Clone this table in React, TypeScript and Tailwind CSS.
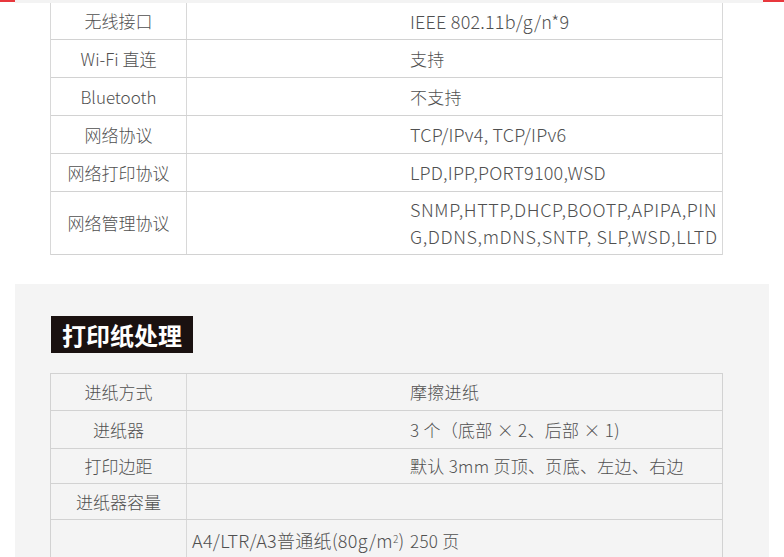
import React from "react";

type R = { label: string; value: React.ReactNode; h: string; v?: string };

const rows1: R[] = [
  { label: "无线接口", value: "IEEE 802.11b/g/n*9", h: "h-[37px]", v: "text-[18px] tracking-[0.2px]" },
  { label: "Wi-Fi 直连", value: "支持", h: "h-[38px]" },
  { label: "Bluetooth", value: "不支持", h: "h-[38px]" },
  { label: "网络协议", value: "TCP/IPv4, TCP/IPv6", h: "h-[38px]", v: "text-[18px] tracking-[0.2px]" },
  { label: "网络打印协议", value: "LPD,IPP,PORT9100,WSD", h: "h-[38px]", v: "text-[18px] tracking-[0.2px]" },
  {
    label: "网络管理协议",
    value: (
      <div className="leading-[27px]">
        <div>SNMP,HTTP,DHCP,BOOTP,APIPA,PIN</div>
        <div>G,DDNS,mDNS,SNTP, SLP,WSD,LLTD</div>
      </div>
    ),
    h: "h-[63px]",
    v: "text-[18px] tracking-[0.6px]",
  },
];

const rows2: R[] = [
  { label: "进纸方式", value: "摩擦进纸", h: "h-[37px]" },
  { label: "进纸器", value: "3 个（底部 × 2、后部 × 1)", h: "h-[38px]" },
  { label: "打印边距", value: "默认 3mm 页顶、页底、左边、右边", h: "h-[35px]" },
  { label: "进纸器容量", value: "", h: "h-[36px]" },
];

function Row({ label, value, h, v }: R) {
  return (
    <div className={`grid grid-cols-[136px_1fr] border-b border-[#d2d2d2] ${h}`}>
      <div className="flex items-center justify-center border-r border-[#d8d8d8] whitespace-nowrap">
        {label}
      </div>
      <div className={`flex items-center pl-[223px] whitespace-nowrap ${v ?? "tracking-[0.3px]"}`}>{value}</div>
    </div>
  );
}

export default function App() {
  return (
    <div className="w-[784px] h-[557px] overflow-hidden bg-white font-['Noto_Sans_CJK_SC','Noto_Sans',sans-serif] text-[17px] font-light text-[#505050]">
      <div className="flex h-[3px]">
        <div className="w-[15px] h-[2px] bg-[#e8383d]" />
        <div className="flex-1 h-[3px] bg-[#f3f3f3]" />
        <div className="w-[21px] h-[2px] bg-[#e8383d]" />
      </div>

      <div className="ml-[50px] w-[673px] border-l border-r border-[#d8d8d8] bg-white">
        {rows1.map((r) => (
          <Row key={r.label} {...r} />
        ))}
      </div>

      <div className="mx-[15px] mt-[29px] h-[300px] bg-[#f4f4f4] pt-[32px]">
        <div className="ml-[36px] inline-flex h-[37px] items-center bg-[#1a1110] px-[11px] text-[24px] font-bold leading-none text-white">
          打印纸处理
        </div>
        <div className="ml-[35px] mt-[20px] w-[673px] border-l border-r border-t border-[#d2d2d2]">
          {rows2.map((r) => (
            <Row key={r.label} {...r} />
          ))}
          <div className="grid h-[60px] grid-cols-[136px_1fr]">
            <div className="border-r border-[#d8d8d8]" />
            <div className="flex items-start pt-[7px] whitespace-nowrap tracking-[0.3px]">
              <div className="w-[223px] pl-[5px] text-[18px]">
                A4/LTR/A3普通纸(80g/m<sup className="text-[10px]">2</sup>)
              </div>
              <div className="pt-[1px]">250 页</div>
            </div>
          </div>
        </div>
      </div>
    </div>
  );
}
